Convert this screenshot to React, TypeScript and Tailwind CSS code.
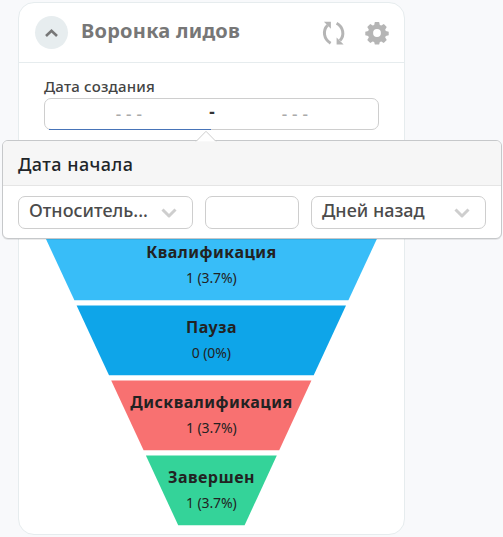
import React from 'react';

const stages = [
  { name: 'Квалификация', value: '1 (3.7%)', color: '#38bdf8', points: '42,230.5 380.8,230.5 348.4,300.3 74.4,300.3', y: 258 },
  { name: 'Пауза', value: '0 (0%)', color: '#0ea5e9', points: '76.6,305.4 346,305.4 313.7,375.3 109,375.3', y: 333 },
  { name: 'Дисквалификация', value: '1 (3.7%)', color: '#f87171', points: '111.2,380.4 311.4,380.4 279.2,450.3 143.6,450.3', y: 408 },
  { name: 'Завершен', value: '1 (3.7%)', color: '#34d399', points: '145.9,455.4 276.8,455.4 244.6,525.3 178.2,525.3', y: 483 },
];

function Funnel() {
  return (
    <svg className="mt-[100px] block h-[297px] w-[385px]" viewBox="19 230 385 297">
      {stages.map((s) => (
        <g key={s.name} textAnchor="middle" fill="#222">
          <polygon points={s.points} fill={s.color} />
          <text className="tracking-[0.5px]" x="211.5" y={s.y} fontSize="16" fontWeight="700">{s.name}</text>
          <text className="tracking-[-0.1px]" x="211.3" y={s.y + 25} fontSize="14">{s.value}</text>
        </g>
      ))}
    </svg>
  );
}

function Select({ label }: { label: string }) {
  return (
    <div className="flex h-[33px] w-[175px] items-center justify-between rounded-[7px] border border-[#cecece] bg-white pr-[15px] pl-[10px]">
      <span className="-mt-[4px] text-[18px] font-medium whitespace-nowrap text-[#4b4b4b]">{label}</span>
      <svg className="h-[10px] w-4" viewBox="0 0 16 10" fill="none" stroke="#cecece" strokeWidth="3">
        <path d="M1.5 1.5 8 8l6.5-6.5" strokeLinejoin="round" />
      </svg>
    </div>
  );
}

function Popover() {
  return (
    <div className="absolute top-[140px] left-[2px] h-[99px] w-[500px] rounded-[6px] border border-[#c6c8ca] bg-white shadow-[0_1px_0_rgba(0,0,0,0.08)]">
      <svg className="absolute -top-[11px] left-[192px] h-3 w-[22px]" viewBox="0 0 22 12">
        <path d="M1 11.5 11 1.3l10 10.2" fill="#fff" stroke="#cecece" />
        <path d="M1 12h20" stroke="#f6f6f6" />
      </svg>
      <div className="flex h-[45px] items-center rounded-t-[5px] border-b border-[#e5e5e5] bg-[#f6f6f6] px-[15px] text-[18px] font-medium tracking-[0.45px] text-[#212529]">
        <span className="mt-[3px]">Дата начала</span>
      </div>
      <div className="flex gap-3 px-[15px] pt-[10px]">
        <Select label="Относитель..." />
        <div className="h-[33px] w-[94px] rounded-[7px] border border-[#cecece]" />
        <Select label="Дней назад" />
      </div>
    </div>
  );
}

export default function App() {
  return (
    <div className="relative h-[537px] w-[503px] overflow-hidden bg-[#f8f9fb] pt-[2px] pl-[18px] font-['Noto_Sans',sans-serif]">
      <section className="h-[533px] w-[387px] rounded-[16px] border border-[#e6ecee] bg-white">
        <header className="flex h-[60px] items-center border-b border-[#e6ecee] pr-[15px] pl-4">
          <button className="flex size-[33px] items-center justify-center rounded-full bg-[#e7edef]">
            <svg className="h-2 w-[13px]" viewBox="0 0 13 8" fill="none" stroke="#777" strokeWidth="2.6">
              <path d="m1 7 5.5-5.2L12 7" />
            </svg>
          </button>
          <h1 className="-mt-1 ml-[13px] flex-1 text-[20px] font-bold tracking-[0.25px] text-[#777]">Воронка лидов</h1>
          <svg className="mr-[19px] h-6 w-6" viewBox="0.4 0 24 24">
            <path d="M9 22.2C2 18 .9 9.5 6 4.3M15 2.2c6.8 3.7 8.2 12 3.4 17.4" fill="none" stroke="#b5b5b5" strokeWidth="3" />
            <path d="M2.3.8h7v7zM22 23.4h-7v-7z" fill="#b5b5b5" />
          </svg>
          <svg className="h-6 w-6" viewBox="-0.3 -0.3 24.6 24.6" fill="#b5b5b5" fillRule="evenodd">
            <path d="M9.8.8h4.4l.7 3 1.5.6L19 2.8 22 5.9l-1.6 2.5.6 1.5 3 .7v3.8l-3 .7-.6 1.5 1.6 2.5-3.1 3.1-2.5-1.6-1.5.6-.7 2.6H9.8l-.7-2.6-1.5-.6-2.5 1.6L2 19.1l1.6-2.5-.6-1.5-3-.7v-3.8l3-.7.6-1.5L2 5.9l3.1-3.1 2.5 1.6 1.5-.6zM12 8a4 4 0 1 0 0 8 4 4 0 0 0 0-8z" />
          </svg>
        </header>
        <div className="px-[25px] pt-[13px]">
          <div className="h-[22px] text-[15px] leading-[20px] font-medium tracking-[0.2px] text-[#444]">Дата создания</div>
          <div className="relative flex h-8 w-[335px] items-center rounded-[7px] border border-[#cecece] text-[17px] font-medium text-[#aaa]">
            <span className="w-[166px] pl-[2px] text-center tracking-[0.3px]">- - -</span>
            <span className="relative -mt-[5px] flex w-[2px] justify-center font-bold text-[#333]">-</span>
            <span className="flex-1 pr-[1px] text-center tracking-[0.3px]">- - -</span>
            <div className="absolute -bottom-px left-1 h-px w-[162px] bg-[#4774b8]" />
          </div>
        </div>
        <Funnel />
      </section>
      <Popover />
    </div>
  );
}
